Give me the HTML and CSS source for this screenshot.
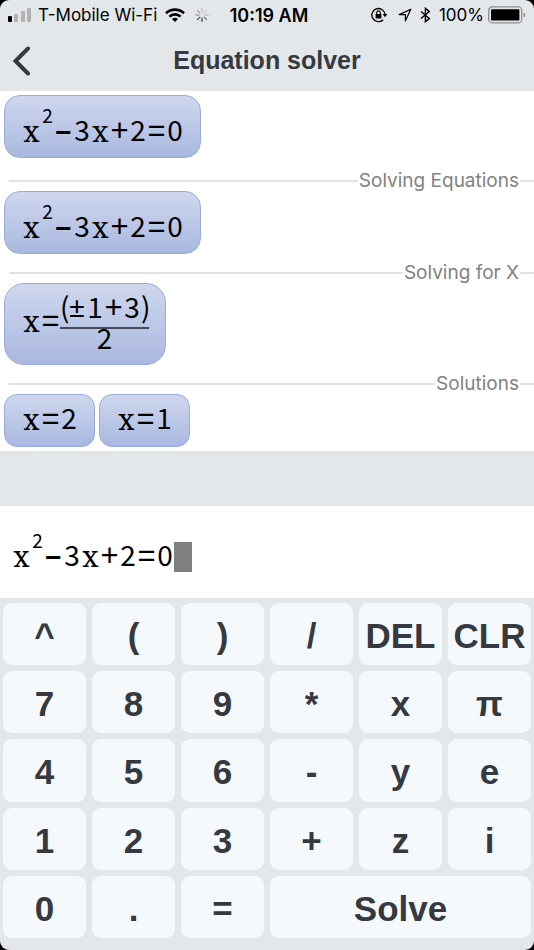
FILE: index.html
```html
<!DOCTYPE html>
<html lang="en">
<head>
    <meta charset="UTF-8" />
    <meta name="viewport" content="width=device-width, initial-scale=1.0" />
    <title>Equation solver</title>
    <link rel="stylesheet" href="styles.css">
</head>
<body>
<div class="app">

    <header>
        <div class="status-bar">
            <div class="status-left">
                <svg class="signal" width="24" height="16" viewBox="0 0 24 16">
                    <rect x="0" y="9" width="4" height="6" rx="1" fill="#000" />
                    <rect x="6" y="7" width="4" height="8" rx="1" fill="#b0b2b4" />
                    <rect x="13" y="4" width="4" height="11" rx="1" fill="#b0b2b4" />
                    <rect x="19" y="1" width="4" height="14" rx="1" fill="#b0b2b4" />
                </svg>
                <span class="carrier">T-Mobile Wi-Fi</span>
                <svg width="20" height="14" viewBox="0 0 20 14" fill="none" stroke="#000" stroke-width="2.6">
                    <path d="M1 5.2C6 .4 14 .4 19 5.2" />
                    <path d="M4.4 8.7C7.4 5.6 12.6 5.6 15.6 8.7" />
                    <path d="M10 14L7 10.9C8.6 9.3 11.4 9.3 13 10.9Z" fill="#000" stroke="none" />
                </svg>
                <svg class="spinner" width="14" height="14" viewBox="0 0 14 14" stroke-width="1.2" stroke-linecap="round">
                    <path d="M7 .7V4" stroke="#b5b7ba" />
                    <path d="M11.5 2.5L9.1 4.9" stroke="#c8cacc" />
                    <path d="M13.3 7H10" stroke="#aaa" />
                    <path d="M11.5 11.5L9.1 9.1" stroke="#777" />
                    <path d="M7 13.3V10" stroke="#333" />
                    <path d="M2.5 11.5L4.9 9.1" stroke="#555" />
                    <path d="M.7 7H4" stroke="#777" />
                    <path d="M2.5 2.5L4.9 4.9" stroke="#999" />
                </svg>
            </div>
            <span class="clock">10:19 AM</span>
            <div class="status-right">
                <svg width="17" height="16" viewBox="0 0 17 16">
                    <path d="M12.2 12.7A6.6 6.6 0 1 1 14 7.2" fill="none" stroke="#000" stroke-width="1.3" />
                    <path d="M11.6 7.1H16.4L14 10.2Z" />
                    <rect x="4.6" y="7" width="5.8" height="4.4" rx=".6" />
                    <path d="M5.7 7.2V5.7a1.8 1.8 0 0 1 3.6 0V7.2" fill="none" stroke="#000" stroke-width="1.1" />
                </svg>
                <svg class="location" width="14" height="14" viewBox="0 0 14 14" fill="none" stroke="#000" stroke-width="1.2" stroke-linejoin="round">
                    <path d="M12.8 1.2L1.2 6.6H7.4V12.8Z" />
                </svg>
                <svg class="bluetooth" width="11" height="16" viewBox="0 0 11 16" fill="none" stroke="#000" stroke-width="1.4">
                    <path d="M1 4.5L9.3 11.4L5.4 14.7V1.3L9.3 4.6L1 11.5" />
                </svg>
                <span>100%</span>
                <svg class="battery" width="38" height="18" viewBox="0 0 38 18">
                    <rect x=".7" y=".9" width="33" height="16" rx="3.5" fill="none" stroke="#8e9092" stroke-width="1.3" />
                    <rect x="3" y="3.2" width="28.4" height="11.4" rx="1.2" />
                    <path d="M35.6 6.4Q37.4 7.2 37.4 9T35.6 11.6Z" fill="#8e9092" />
                </svg>
            </div>
        </div>
        <div class="title-bar">
            <button class="back" aria-label="Back">
                <svg width="19" height="30" viewBox="0 0 19 30" fill="none" stroke="#353941" stroke-width="4" stroke-linecap="round">
                    <path d="M16 2.5L3.5 15L16 27.5" />
                </svg>
            </button>
            <h1>Equation solver</h1>
        </div>
    </header>

    <main class="steps">
        <div class="step original">
            <div class="chip"><i>x</i><sup>2</sup><b class="minus">−</b><span>3</span><i>x</i><b>+</b><span>2</span><b>=</b><span>0</span></div>
        </div>

        <h2>Solving Equations</h2>
        <div class="step">
            <div class="chip"><i>x</i><sup>2</sup><b class="minus">−</b><span>3</span><i>x</i><b>+</b><span>2</span><b>=</b><span>0</span></div>
        </div>

        <h2>Solving for X</h2>
        <div class="step">
            <div class="chip tall"><i>x</i><b>=</b><div class="fraction">
                <div class="numerator"><em>(</em><b class="sign">±</b><span>1</span><b>+</b><span>3</span><em>)</em></div>
                <div class="denominator"><span>2</span></div>
            </div></div>
        </div>

        <h2>Solutions</h2>
        <div class="step solutions">
            <div class="chip short"><i>x</i><b>=</b><span>2</span></div>
            <div class="chip short"><i>x</i><b>=</b><span>1</span></div>
        </div>
    </main>

    <div class="editor" role="textbox" aria-label="Equation" tabindex="0"><i>x</i><sup>2</sup><b class="minus">−</b><span>3</span><i>x</i><b>+</b><span>2</span><b>=</b><span>0</span><span class="cursor"></span></div>

    <div class="keypad">
        <button>^</button>
        <button>(</button>
        <button>)</button>
        <button>/</button>
        <button>DEL</button>
        <button>CLR</button>
        <button>7</button>
        <button>8</button>
        <button>9</button>
        <button>*</button>
        <button>x</button>
        <button>π</button>
        <button>4</button>
        <button>5</button>
        <button>6</button>
        <button>-</button>
        <button>y</button>
        <button>e</button>
        <button>1</button>
        <button>2</button>
        <button>3</button>
        <button>+</button>
        <button>z</button>
        <button>i</button>
        <button>0</button>
        <button>.</button>
        <button>=</button>
        <button class="solve">Solve</button>
    </div>

</div>
</body>
</html>
```
FILE: styles.css
```css
:root {
    --panel: #e4e7ea;
    --ink: #353941;
    --key: #f6f9fc;
    --chip-border: #98abde;
}

* {
    box-sizing: border-box;
}

body {
    margin: 0;
    background: #000;
    font-family: Inter, "Liberation Sans", sans-serif;
}

.app {
    display: flex;
    flex-direction: column;
    min-height: 100vh;
    background: var(--panel);
    border-radius: 9px;
    overflow: hidden;
}

/* status bar + title */
.status-bar {
    display: grid;
    grid-template-columns: 1fr auto 1fr;
    align-items: center;
    height: 30px;
    padding: 0 8px;
    font-size: 17px;
    color: #000;
}

.status-left,
.status-right {
    display: flex;
    align-items: center;
    white-space: nowrap;
}

.status-right {
    justify-content: flex-end;
}

.carrier {
    margin: 0 8px 0 6px;
}

.spinner {
    margin-left: 10px;
}

.clock {
    padding-left: 4px;
    font-size: 18px;
    font-weight: 600;
}

.location {
    margin: 0 8px 0 10px;
}

.bluetooth {
    margin-right: 8px;
}

.battery {
    margin-left: 4px;
}

.title-bar {
    display: grid;
    grid-template-columns: 48px 1fr 48px;
    align-items: center;
    height: 61px;
}

.back {
    display: flex;
    padding: 0 0 0 12px;
    border: none;
    background: none;
    cursor: pointer;
}

h1 {
    margin: 0;
    text-align: center;
    font: bold 25px "Liberation Sans", sans-serif;
    color: var(--ink);
}

/* steps */
.steps {
    padding: 4px 0;
    background: #fff;
}

.step {
    display: flex;
    gap: 4px;
    padding: 0 4px 9px;
}

.step.original {
    padding-bottom: 13px;
}

.step.solutions {
    padding-bottom: 0;
}

h2 {
    display: flex;
    align-items: center;
    gap: 1px;
    margin: 0 0 0 9px;
    font-size: 19px;
    font-weight: 400;
    line-height: 20px;
    color: #828282;
}

h2::before,
h2::after {
    content: "";
    height: 2px;
    background: #e2e2e2;
}

h2::before {
    flex: 1;
}

h2::after {
    width: 14px;
}

.chip,
.editor {
    display: flex;
    font-family: "Noto Sans CJK SC", sans-serif;
    font-size: 28px;
    line-height: 30px;
    color: #000;
}

.chip {
    height: 63px;
    padding: 18px 16px 0 17px;
    border: 1px solid var(--chip-border);
    border-radius: 16px;
    background: linear-gradient(#cfd7ee, #aab8e0);
}

.chip.tall {
    height: 82px;
    padding-top: 20px;
    border-radius: 20px;
}

.chip.short {
    height: 53px;
    padding-top: 7px;
    border-radius: 13px;
}

/* every symbol sits in its own fixed cell */
.chip span,
.editor span {
    width: 18px;
    text-align: center;
}

.chip i,
.editor i,
.chip b,
.editor b {
    display: flex;
    justify-content: center;
    width: 19px;
    font-style: normal;
    font-weight: 400;
}

.chip i,
.editor i {
    padding-top: 3px;
    font-family: "DejaVu Serif", serif;
    font-size: 29px;
}

.chip b,
.editor b {
    padding-top: 4px;
    font-family: "Liberation Mono", monospace;
    font-size: 31px;
}

.chip .minus,
.editor .minus {
    padding-top: 6px;
    font-size: 28px;
    font-weight: 700;
}

.chip .sign {
    width: 18px;
    font-size: 28px;
}

.chip em {
    width: 8px;
    text-align: center;
    font-style: normal;
}

sup {
    width: 13px;
    margin-top: -14px;
    text-align: center;
    font-size: 19px;
}

.fraction {
    margin-top: -13px;
}

.numerator {
    display: flex;
    height: 38px;
    border-bottom: 2px solid #45485a;
}

.denominator {
    display: flex;
    justify-content: center;
    line-height: 16px;
}

/* input line */
.editor {
    height: 92px;
    margin-top: 55px;
    padding: 33px 12px 0;
    background: #fff;
    outline: none;
}

.editor .cursor {
    height: 30px;
    margin-top: 3px;
    background: #808080;
}

/* keypad */
.keypad {
    flex: 1;
    display: grid;
    grid-template-columns: repeat(6, 1fr);
    grid-auto-rows: 1fr;
    gap: 6px;
    padding: 5px 3px 12px;
}

.keypad button {
    min-width: 0;
    padding: 4px 0 0;
    border: none;
    border-radius: 9px;
    background: var(--key);
    color: var(--ink);
    font: bold 35px "Liberation Sans", sans-serif;
    cursor: pointer;
}

.keypad button:active {
    background: #dfe5ea;
}

.keypad .solve {
    grid-column: span 3;
}
```
